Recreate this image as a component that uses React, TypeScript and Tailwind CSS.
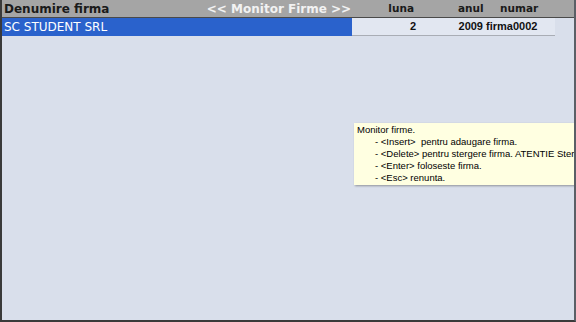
export default function App() {
    return (
        <div className="relative w-[576px] h-[322px] bg-[#d9dfeb] overflow-hidden font-['DejaVu_Sans',Tahoma,sans-serif] border-l-2 border-b-2 border-r-2 border-l-[#3a3a3a] border-b-[#3a3a3a] border-r-[#5a5f66]">
            <div className="flex h-[18px] items-center bg-[#a5a5a5] border-b border-[#4a4a4a] font-bold whitespace-nowrap">
                <div className="w-[202px] pl-[2px] text-[12px] text-[#1a1a1a]">Denumire firma</div>
                <div className="w-[150px] text-center text-[12px] text-[#f2f2f2]">&lt;&lt; Monitor Firme &gt;&gt;</div>
                <div className="w-[60px] text-right text-[10.5px] text-[#1a1a1a]">luna</div>
                <div className="w-[44px] pl-[44px] text-[10.5px] text-[#1a1a1a]">anul</div>
                <div className="pl-[42px] text-[10.5px] text-[#1a1a1a]">numar</div>
            </div>
            <div className="flex h-[18px] items-center whitespace-nowrap">
                <div className="w-[350px] h-full flex items-center pl-[2px] bg-[#2a62cc] text-white text-[12px]">SC STUDENT SRL</div>
                <div className="flex h-full items-center w-[203px] bg-[#e2e7f1] border-b border-[#a9adb5] font-bold text-[11px] text-[#111] font-['Liberation_Sans',Arial,sans-serif]">
                    <div className="w-[64px] text-right">2</div>
                    <div className="w-[67px] text-right">2009</div>
                    <div className="pl-[3px]">firma0002</div>
                </div>
            </div>
            <div className="absolute left-[352px] top-[123px] w-[240px] h-[62px] bg-[#ffffe1] shadow-[1px_1px_2px_rgba(0,0,0,0.35)] pl-[3px] pt-[1px] text-[9.5px] leading-[12px] text-black font-['Liberation_Sans',Tahoma,sans-serif] whitespace-nowrap">
                <div>Monitor firme.</div>
                <div className="pl-[18px]">- &lt;Insert&gt;&nbsp; pentru adaugare firma.</div>
                <div className="pl-[18px]">- &lt;Delete&gt; pentru stergere firma. ATENTIE Sterge</div>
                <div className="pl-[18px]">- &lt;Enter&gt; foloseste firma.</div>
                <div className="pl-[18px]">- &lt;Esc&gt; renunta.</div>
            </div>
        </div>
    );
}
